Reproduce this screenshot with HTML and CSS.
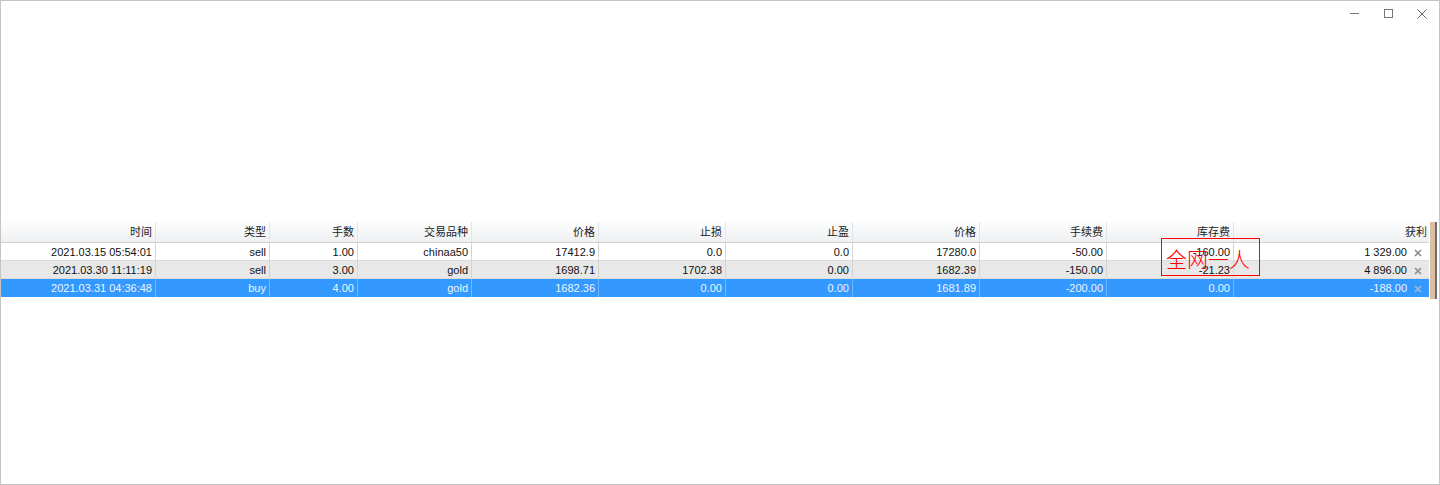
FILE: index.html
```html
<!DOCTYPE html>
<html lang="zh-CN">
<head>
    <meta charset="UTF-8">
    <title>交易</title>
    <link rel="stylesheet" href="styles.css">
</head>
<body>
<div class="window">
    <div class="titlebar">
        <span class="ctl ctl-min"></span>
        <span class="ctl ctl-max"></span>
        <span class="ctl ctl-close">
            <svg width="10" height="10" viewBox="0 0 10 10"><path d="M0.5 0.5 L9.5 9.5 M9.5 0.5 L0.5 9.5" stroke="#666" stroke-width="1"/></svg>
        </span>
    </div>

    <div class="content">
        <div class="grid-wrap">
            <div class="grid">
                <div class="row head">
                    <div class="cell">时间</div>
                    <div class="cell">类型</div>
                    <div class="cell">手数</div>
                    <div class="cell">交易品种</div>
                    <div class="cell">价格</div>
                    <div class="cell">止损</div>
                    <div class="cell">止盈</div>
                    <div class="cell">价格</div>
                    <div class="cell">手续费</div>
                    <div class="cell">库存费</div>
                    <div class="cell last">获利</div>
                </div>
                <div class="row">
                    <div class="cell">2021.03.15 05:54:01</div>
                    <div class="cell">sell</div>
                    <div class="cell">1.00</div>
                    <div class="cell">chinaa50</div>
                    <div class="cell">17412.9</div>
                    <div class="cell">0.0</div>
                    <div class="cell">0.0</div>
                    <div class="cell">17280.0</div>
                    <div class="cell">-50.00</div>
                    <div class="cell">-160.00</div>
                    <div class="cell last">1 329.00<svg class="x" width="8" height="8" viewBox="0 0 8 8"><path d="M1 1 L7 7 M7 1 L1 7"/></svg></div>
                </div>
                <div class="row alt">
                    <div class="cell">2021.03.30 11:11:19</div>
                    <div class="cell">sell</div>
                    <div class="cell">3.00</div>
                    <div class="cell">gold</div>
                    <div class="cell">1698.71</div>
                    <div class="cell">1702.38</div>
                    <div class="cell">0.00</div>
                    <div class="cell">1682.39</div>
                    <div class="cell">-150.00</div>
                    <div class="cell">-21.23</div>
                    <div class="cell last">4 896.00<svg class="x" width="8" height="8" viewBox="0 0 8 8"><path d="M1 1 L7 7 M7 1 L1 7"/></svg></div>
                </div>
                <div class="row selected">
                    <div class="cell">2021.03.31 04:36:48</div>
                    <div class="cell">buy</div>
                    <div class="cell">4.00</div>
                    <div class="cell">gold</div>
                    <div class="cell">1682.36</div>
                    <div class="cell">0.00</div>
                    <div class="cell">0.00</div>
                    <div class="cell">1681.89</div>
                    <div class="cell">-200.00</div>
                    <div class="cell">0.00</div>
                    <div class="cell last">-188.00<svg class="x" width="8" height="8" viewBox="0 0 8 8"><path d="M1 1 L7 7 M7 1 L1 7"/></svg></div>
                </div>
            </div>
            <div class="side-bar"></div>
        </div>
        <!-- watermark box drawn over the table -->
        <div class="stamp">全网一人</div>
    </div>
</div>
</body>
</html>
```

FILE: styles.css
```css
body {
    margin: 0;
    background-color: #fff;
    font-family: "Liberation Sans", "Noto Sans CJK SC", sans-serif;
}
.window {
    width: 1440px;
    height: 485px;
    box-sizing: border-box;
    border: 1px solid #c4c4c4;
    background-color: #fff;
    position: relative;
}
.titlebar {
    height: 25px;
    display: flex;
    justify-content: flex-end;
    align-items: center;
    padding-right: 0;
}
.ctl {
    width: 34px;
    height: 25px;
    display: flex;
    align-items: center;
    justify-content: center;
}
.ctl-min::before {
    content: "";
    width: 9px;
    height: 1px;
    background-color: #777;
}
.ctl-max::before {
    content: "";
    width: 7px;
    height: 7px;
    border: 1px solid #777;
}
.content {
    padding-top: 196px;
    position: relative;
}
.grid-wrap {
    display: flex;
    align-items: stretch;
}
.grid {
    width: 1428px;
    font-size: 11px;
    color: #111;
}
.row {
    display: grid;
    grid-template-columns: 155px 114px 88px 114px 127px 127px 127px 127px 127px 127px 195px;
    height: 17px;
    border-bottom: 1px solid #dcdcdc;
    background-color: #fff;
}
.row.head {
    height: 20px;
    background: linear-gradient(#fdfdfd, #eef0f2);
    border-bottom: 1px solid #cfd2d6;
    color: #222;
}
.row.alt {
    background-color: #e8e8e8;
}
.row.selected {
    background-color: #3399ff;
    color: #eef5ff;
    border-bottom: none;
    height: 18px;
}
.cell {
    text-align: right;
    line-height: 17px;
    padding-top: 1px;
    padding-right: 3px;
    border-right: 1px solid #d4d4d4;
    white-space: nowrap;
    overflow: hidden;
}
.row.head .cell {
    border-right-color: #e2e4e7;
    line-height: 19px;
}
.row.selected .cell {
    border-right-color: #6fb5ff;
}
.cell.last {
    border-right: none;
    padding-right: 22px;
    position: relative;
}
.row.head .cell.last {
    padding-right: 2px;
}
.x {
    position: absolute;
    right: 7px;
    top: 6px;
    stroke: #8c8c8c;
    stroke-width: 1.7;
}
.row.selected .x {
    stroke: #9fb8d4;
}
.side-bar {
    width: 5px;
    margin-left: 1px;
    height: 77px;
    background-color: #dcbfa2;
    border-right: 2px solid #6b6b6b;
}
.stamp {
    position: absolute;
    left: 1160px;
    top: 212px;
    width: 99px;
    height: 38px;
    border: 1px solid #f00;
    color: #f00;
    font-family: "Noto Sans CJK SC", sans-serif;
    font-weight: 300;
    font-size: 21px;
    line-height: 38px;
    padding-left: 4px;
    box-sizing: border-box;
}
```
